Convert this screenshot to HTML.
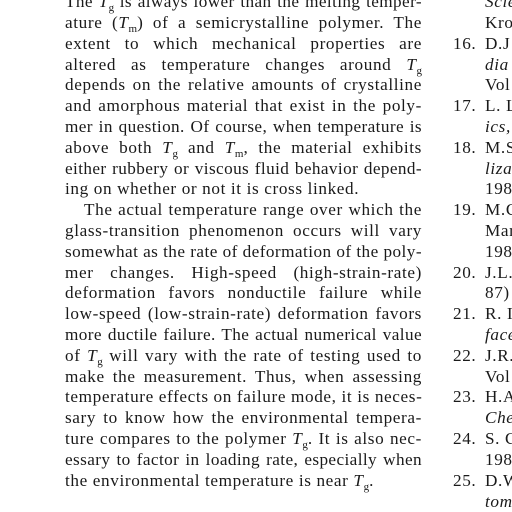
<!DOCTYPE html>
<html><head><meta charset="utf-8"><style>
html,body{margin:0;padding:0;background:#fff;width:512px;height:512px;overflow:hidden}
body{position:relative;font-family:"Liberation Serif",serif;font-size:17.2px;letter-spacing:0.62px;color:#1a1a1a}
.l{position:absolute;left:65px;width:357px;height:21px;line-height:21px;text-align:justify;text-align-last:justify;white-space:nowrap}
.l.e{text-align-last:left}
.t{letter-spacing:0.4px}
.r{position:absolute;left:485px;height:21px;line-height:21px;white-space:nowrap}
.n{position:absolute;left:453px;height:21px;line-height:21px}
i{font-style:italic}
sub{font-size:11px;vertical-align:-4px;line-height:0;letter-spacing:0}
</style></head><body>
<div class="l t" style="top:-9px">The <i>T</i><sub>g</sub> is always lower than the melting temper-</div>
<div class="l" style="top:12px">ature (<i>T</i><sub>m</sub>) of a semicrystalline polymer. The</div>
<div class="l" style="top:33px">extent to which mechanical properties are</div>
<div class="l" style="top:54px">altered as temperature changes around <i>T</i><sub>g</sub></div>
<div class="l" style="top:74px">depends on the relative amounts of crystalline</div>
<div class="l" style="top:95px">and amorphous material that exist in the poly-</div>
<div class="l t" style="top:116px">mer in question. Of course, when temperature is</div>
<div class="l" style="top:137px">above both <i>T</i><sub>g</sub> and <i>T</i><sub>m</sub>, the material exhibits</div>
<div class="l t" style="top:158px">either rubbery or viscous fluid behavior depend-</div>
<div class="l e" style="top:178px">ing on whether or not it is cross linked.</div>
<div class="l" style="top:199px;text-indent:19px">The actual temperature range over which the</div>
<div class="l" style="top:220px">glass-transition phenomenon occurs will vary</div>
<div class="l" style="top:241px;letter-spacing:0.45px">somewhat as the rate of deformation of the poly-</div>
<div class="l" style="top:262px">mer changes. High-speed (high-strain-rate)</div>
<div class="l" style="top:282px">deformation favors nonductile failure while</div>
<div class="l" style="top:303px">low-speed (low-strain-rate) deformation favors</div>
<div class="l t" style="top:324px">more ductile failure. The actual numerical value</div>
<div class="l" style="top:345px">of <i>T</i><sub>g</sub> will vary with the rate of testing used to</div>
<div class="l" style="top:366px">make the measurement. Thus, when assessing</div>
<div class="l" style="top:386px">temperature effects on failure mode, it is neces-</div>
<div class="l" style="top:407px">sary to know how the environmental tempera-</div>
<div class="l" style="top:428px">ture compares to the polymer <i>T</i><sub>g</sub>. It is also nec-</div>
<div class="l t" style="top:449px">essary to factor in loading rate, especially when</div>
<div class="l e" style="top:470px">the environmental temperature is near <i>T</i><sub>g</sub>.</div>

<div class="r" style="top:-9px"><i>Scie</i></div>
<div class="r" style="top:12px">Kro</div>
<div class="n" style="top:33px">16.</div><div class="r" style="top:33px">D.J</div>
<div class="r" style="top:54px"><i>dia</i></div>
<div class="r" style="top:74px">Vol</div>
<div class="n" style="top:95px">17.</div><div class="r" style="top:95px">L. L</div>
<div class="r" style="top:116px"><i>ics,</i></div>
<div class="n" style="top:137px">18.</div><div class="r" style="top:137px">M.S</div>
<div class="r" style="top:158px"><i>liza</i></div>
<div class="r" style="top:178px">198</div>
<div class="n" style="top:199px">19.</div><div class="r" style="top:199px">M.C</div>
<div class="r" style="top:220px">Mar</div>
<div class="r" style="top:241px">198</div>
<div class="n" style="top:262px">20.</div><div class="r" style="top:262px">J.L.</div>
<div class="r" style="top:282px">87)</div>
<div class="n" style="top:303px">21.</div><div class="r" style="top:303px">R. I</div>
<div class="r" style="top:324px"><i>face</i></div>
<div class="n" style="top:345px">22.</div><div class="r" style="top:345px">J.R.</div>
<div class="r" style="top:366px">Vol</div>
<div class="n" style="top:386px">23.</div><div class="r" style="top:386px">H.A</div>
<div class="r" style="top:407px"><i>Che</i></div>
<div class="n" style="top:428px">24.</div><div class="r" style="top:428px">S. C</div>
<div class="r" style="top:449px">198</div>
<div class="n" style="top:470px">25.</div><div class="r" style="top:470px">D.W</div>
<div class="r" style="top:491px"><i>tom</i></div>
</body></html>
